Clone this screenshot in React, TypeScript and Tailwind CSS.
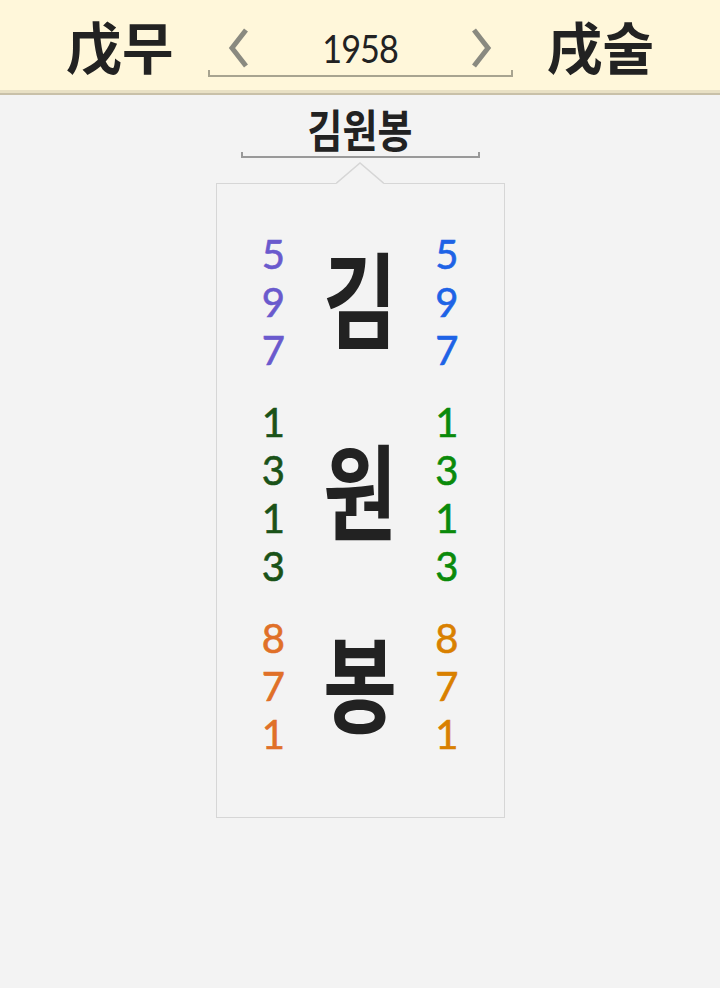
import * as React from "react";

const KR = "font-['Noto_Sans_CJK_KR','Noto_Sans',sans-serif]";
const NUM = "font-['Lato','Noto_Sans',sans-serif]";

type Group = { ch: string; left: string[]; right: string[]; lc: string; rc: string };

const groups: Group[] = [
    { ch: "김", left: ["5", "9", "7"], right: ["5", "9", "7"], lc: "text-[#6a5acd]", rc: "text-[#1e63e6]" },
    { ch: "원", left: ["1", "3", "1", "3"], right: ["1", "3", "1", "3"], lc: "text-[#1a5218]", rc: "text-[#0a8a0a]" },
    { ch: "봉", left: ["8", "7", "1"], right: ["8", "7", "1"], lc: "text-[#e07028]", rc: "text-[#d98000]" },
];

function Chevron({ dir }: { dir: "left" | "right" }) {
    const d = dir === "left" ? "M19 3 L5 21 L19 39" : "M3 3 L17 21 L3 39";
    return (
        <svg width="22" height="42" viewBox="0 0 22 42" className="shrink-0">
            <path d={d} fill="none" stroke="#8a8a80" strokeWidth="5" strokeLinecap="butt" strokeLinejoin="miter" />
        </svg>
    );
}

function Digits({ items, color }: { items: string[]; color: string }) {
    return (
        <div className={`w-[114px] flex flex-col items-center ${NUM} ${color}`}>
            {items.map((d, i) => (
                <div key={i} className="h-[48px] leading-[48px] text-[40px] [-webkit-text-stroke:0.6px_currentColor]">
                    {d}
                </div>
            ))}
        </div>
    );
}

export default function App() {
    return (
        <div className={`min-h-screen bg-[#f3f3f3] ${KR}`}>
            {/* header */}
            <div className="h-[90px] bg-[#fff7da] flex items-center justify-center gap-[34px]">
                <div className="text-[56px] font-bold text-[#222] leading-none">戊무</div>
                <div className="relative w-[305px] h-[60px] flex items-center justify-between px-[19px] pt-[6px]">
                    <Chevron dir="left" />
                    <div className={`${NUM} text-[38px] text-[#222] leading-none tracking-[-1px] scale-x-[0.9]`}>1958</div>
                    <Chevron dir="right" />
                    <div className="absolute left-0 right-0 bottom-[-2px] h-[7px] border-x-2 border-b-2 border-[#a8a490]" />
                </div>
                <div className="text-[56px] font-bold text-[#222] leading-none">戌술</div>
            </div>
            <div className="h-[3px] bg-[#e8e0c4]" />
            <div className="h-[2px] bg-[#c8c0a8]" />

            {/* name */}
            <div className="flex flex-col items-center pt-[11px]">
                <div className="text-[38px] font-bold text-[#222] leading-[46px] scale-y-[1.2]">김원봉</div>
                <div className="w-[239px] h-[6px] border-x-2 border-b-2 border-[#999]" />
            </div>

            {/* card */}
            <div className="flex flex-col items-center pt-[4px]">
                <div className="w-[289px] flex items-end h-[22px]">
                    <div className="flex-1 border-b border-[#d6d6d6]" />
                    <svg width="48" height="22" viewBox="0 0 48 22" className="shrink-0">
                        <path d="M0 21.5 L24 1 L48 21.5" fill="none" stroke="#d6d6d6" strokeWidth="1.5" />
                    </svg>
                    <div className="flex-1 border-b border-[#d6d6d6]" />
                </div>
                <div className="w-[289px] h-[634px] border-x border-b border-[#d6d6d6] pt-[46px] flex flex-col gap-[24px]">
                    {groups.map((g) => (
                        <div key={g.ch} className="flex items-center">
                            <Digits items={g.left} color={g.lc} />
                            <div className="w-[60px] flex justify-center">
                                <div className="text-[80px] font-bold text-[#222] leading-none scale-y-[1.3] -translate-y-[7px]">{g.ch}</div>
                            </div>
                            <Digits items={g.right} color={g.rc} />
                        </div>
                    ))}
                </div>
            </div>
        </div>
    );
}
